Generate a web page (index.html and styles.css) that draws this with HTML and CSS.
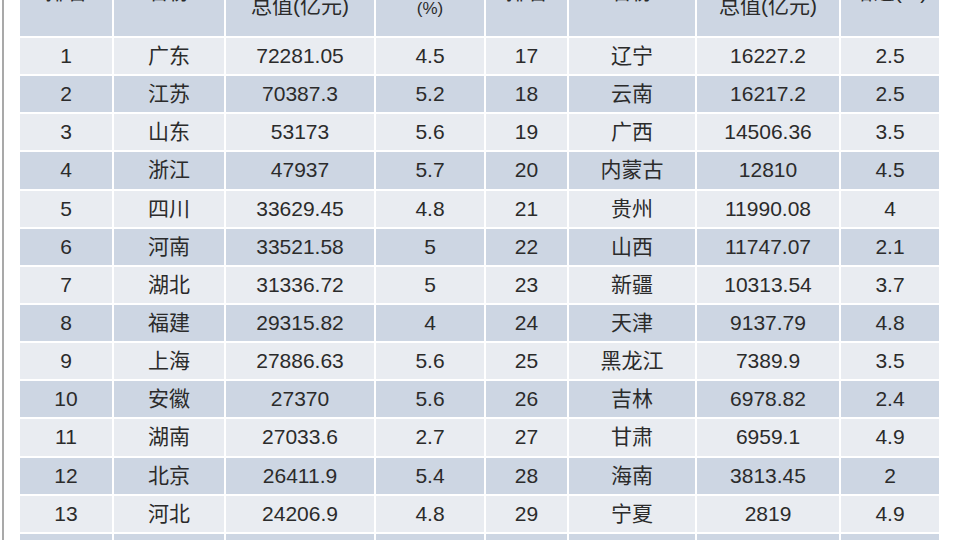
FILE: index.html
```html
<!DOCTYPE html>
<html lang="zh-CN">
<head>
<meta charset="utf-8">
<title>各省GDP排名</title>
<link rel="stylesheet" href="styles.css">
</head>
<body>
<div class="frame">
  <div class="table">
    <div class="row head">
      <div class="cell">排名</div>
      <div class="cell">省份</div>
      <div class="cell two"><span class="txt">地区生产<br>总值(亿元)</span></div>
      <div class="cell two rate"><span class="txt">增速<br><span class="pct">(%)</span></span></div>
      <div class="cell">排名</div>
      <div class="cell">省份</div>
      <div class="cell two"><span class="txt">地区生产<br>总值(亿元)</span></div>
      <div class="cell">增速(%)</div>
    </div>
    <div class="row odd"><div class="cell">1</div><div class="cell">广东</div><div class="cell">72281.05</div><div class="cell">4.5</div><div class="cell">17</div><div class="cell">辽宁</div><div class="cell">16227.2</div><div class="cell">2.5</div></div>
    <div class="row even"><div class="cell">2</div><div class="cell">江苏</div><div class="cell">70387.3</div><div class="cell">5.2</div><div class="cell">18</div><div class="cell">云南</div><div class="cell">16217.2</div><div class="cell">2.5</div></div>
    <div class="row odd"><div class="cell">3</div><div class="cell">山东</div><div class="cell">53173</div><div class="cell">5.6</div><div class="cell">19</div><div class="cell">广西</div><div class="cell">14506.36</div><div class="cell">3.5</div></div>
    <div class="row even"><div class="cell">4</div><div class="cell">浙江</div><div class="cell">47937</div><div class="cell">5.7</div><div class="cell">20</div><div class="cell">内蒙古</div><div class="cell">12810</div><div class="cell">4.5</div></div>
    <div class="row odd"><div class="cell">5</div><div class="cell">四川</div><div class="cell">33629.45</div><div class="cell">4.8</div><div class="cell">21</div><div class="cell">贵州</div><div class="cell">11990.08</div><div class="cell">4</div></div>
    <div class="row even"><div class="cell">6</div><div class="cell">河南</div><div class="cell">33521.58</div><div class="cell">5</div><div class="cell">22</div><div class="cell">山西</div><div class="cell">11747.07</div><div class="cell">2.1</div></div>
    <div class="row odd"><div class="cell">7</div><div class="cell">湖北</div><div class="cell">31336.72</div><div class="cell">5</div><div class="cell">23</div><div class="cell">新疆</div><div class="cell">10313.54</div><div class="cell">3.7</div></div>
    <div class="row even"><div class="cell">8</div><div class="cell">福建</div><div class="cell">29315.82</div><div class="cell">4</div><div class="cell">24</div><div class="cell">天津</div><div class="cell">9137.79</div><div class="cell">4.8</div></div>
    <div class="row odd"><div class="cell">9</div><div class="cell">上海</div><div class="cell">27886.63</div><div class="cell">5.6</div><div class="cell">25</div><div class="cell">黑龙江</div><div class="cell">7389.9</div><div class="cell">3.5</div></div>
    <div class="row even"><div class="cell">10</div><div class="cell">安徽</div><div class="cell">27370</div><div class="cell">5.6</div><div class="cell">26</div><div class="cell">吉林</div><div class="cell">6978.82</div><div class="cell">2.4</div></div>
    <div class="row odd"><div class="cell">11</div><div class="cell">湖南</div><div class="cell">27033.6</div><div class="cell">2.7</div><div class="cell">27</div><div class="cell">甘肃</div><div class="cell">6959.1</div><div class="cell">4.9</div></div>
    <div class="row even"><div class="cell">12</div><div class="cell">北京</div><div class="cell">26411.9</div><div class="cell">5.4</div><div class="cell">28</div><div class="cell">海南</div><div class="cell">3813.45</div><div class="cell">2</div></div>
    <div class="row odd"><div class="cell">13</div><div class="cell">河北</div><div class="cell">24206.9</div><div class="cell">4.8</div><div class="cell">29</div><div class="cell">宁夏</div><div class="cell">2819</div><div class="cell">4.9</div></div>
    <div class="row even"><div class="cell"></div><div class="cell"></div><div class="cell"></div><div class="cell"></div><div class="cell"></div><div class="cell"></div><div class="cell"></div><div class="cell"></div></div>
  </div>
</div>
</body>
</html>
```

FILE: styles.css
```css
html, body {
  margin: 0;
  padding: 0;
  background: #ffffff;
  overflow: hidden;
}

.frame {
  margin-left: 2px;
  width: 936px;
  height: 540px;
  border-left: 2px solid #a9a9a9;
  border-right: 1px solid #c4c4c4;
  padding-left: 16px;
  padding-right: 16px;
  box-sizing: content-box;
  overflow: hidden;
}

.table {
  width: 919px;
  margin-top: -52px;
  display: flex;
  flex-direction: column;
  gap: 2px;
  font-family: "Liberation Sans", "Noto Sans CJK SC", sans-serif;
  font-size: 21px;
  color: #2b2b2b;
}

.row {
  display: grid;
  grid-template-columns: 92px 110px 148px 108px 81px 126px 142px 98px;
  column-gap: 2px;
  height: 36.15px;
}

.row.head {
  height: 88px;
}

.cell {
  display: flex;
  align-items: center;
  justify-content: center;
  text-align: center;
  line-height: 24px;
  white-space: nowrap;
}

.cell.two {
  line-height: 28px;
}

.cell.rate {
  padding-top: 4px;
}

.txt {
  display: block;
}

.pct {
  font-size: 17px;
}

.head .cell,
.even .cell {
  background: #cdd6e3;
}

.odd .cell {
  background: #e9ecf1;
}
```
